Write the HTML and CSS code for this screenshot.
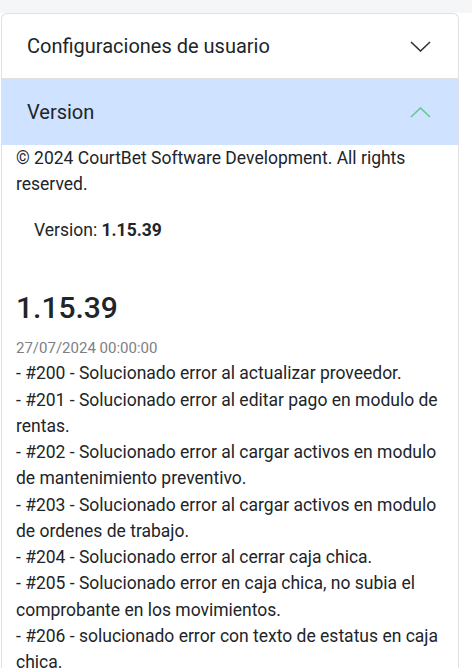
FILE: index.html
```html
<!DOCTYPE html>
<html lang="es">
<head>
<meta charset="utf-8">
<title>Configuración</title>
<link rel="stylesheet" href="styles.css">
</head>
<body>
<div class="topbar"></div>
<div class="accordion">
  <div class="acc-header">
    <span class="acc-title">Configuraciones de usuario</span>
    <svg class="chev" width="21" height="11" viewBox="0 0 21 11"><polyline points="1,1 10.5,10 20,1" fill="none" stroke="#333" stroke-width="1.6"/></svg>
  </div>
  <div class="acc-header active">
    <span class="acc-title">Version</span>
    <svg class="chev" width="21" height="11" viewBox="0 0 21 11"><polyline points="1,10 10.5,1 20,10" fill="none" stroke="#63c98e" stroke-width="1.6"/></svg>
  </div>
  <div class="acc-body">
    <p class="copy">© 2024 CourtBet Software Development. All rights reserved.</p>
    <p class="version">Version: <strong>1.15.39</strong></p>
    <h2 class="rel-title">1.15.39</h2>
    <div class="rel-date">27/07/2024 00:00:00</div>
    <div class="rel-notes">
      <div>- #200 - Solucionado error al actualizar proveedor.</div>
      <div>- #201 - Solucionado error al editar pago en modulo de rentas.</div>
      <div>- #202 - Solucionado error al cargar activos en modulo de mantenimiento preventivo.</div>
      <div>- #203 - Solucionado error al cargar activos en modulo de ordenes de trabajo.</div>
      <div>- #204 - Solucionado error al cerrar caja chica.</div>
      <div>- #205 - Solucionado error en caja chica, no subia el comprobante en los movimientos.</div>
      <div>- #206 - solucionado error con texto de estatus en caja chica.</div>
    </div>
  </div>
</div>
</body>
</html>
```
FILE: styles.css
```css
html, body {
  margin: 0;
  padding: 0;
  background: #ffffff;
  font-family: Roboto, "Liberation Sans", sans-serif;
  color: #212529;
}
.topbar {
  height: 13px;
  background: #f5f6f8;
}
.accordion {
  margin-left: 1px;
  width: 458px;
  box-sizing: border-box;
  border: 1px solid #dfe1e4;
  border-bottom: none;
  border-radius: 6px 6px 0 0;
  overflow: hidden;
  min-height: 700px;
}
.acc-header {
  display: flex;
  align-items: center;
  justify-content: space-between;
  height: 64px;
  padding: 0 27px 0 25px;
  border-bottom: 1px solid #dfe1e4;
  font-size: 20px;
}
.acc-header.active {
  height: 66px;
  background: #cfe2ff;
  border-bottom: none;
}
.acc-title {
  line-height: 1;
}
.chev {
  display: block;
}
.acc-body {
  padding: 0 14px;
  font-size: 17.5px;
  line-height: 1.5;
}
.copy {
  margin: 0;
}
.version {
  margin: 19px 0 0 18px;
}
.version strong {
  font-weight: 700;
}
.rel-title {
  margin: 47px 0 0;
  font-size: 30px;
  line-height: 1.2;
  font-weight: 500;
}
.rel-date {
  margin-top: 11px;
  font-size: 15px;
  line-height: 1.5;
  color: #7d8085;
}
.rel-notes {
  margin-top: 1px;
}
```
